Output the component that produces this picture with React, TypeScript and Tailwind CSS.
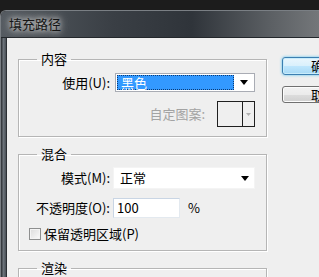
import React from "react";

const Arrow = ({ color = "#000" }: { color?: string }) => (
  <svg width="8" height="5" viewBox="0 0 8 5">
    <path d="M0 0 H8 L4 5 Z" fill={color} />
  </svg>
);

const FillPathDialog = () => {
  return (
    <div className="w-[319px] h-[277px] overflow-hidden bg-[#1c1c1c] pt-[10px] font-['Noto_Sans_CJK_SC','Noto_Sans_CJK_JP',sans-serif] text-[13px] text-black">
      <div className="h-full flex flex-col rounded-tl-[6px] overflow-hidden border-t border-l border-[#7a7f84]">
        {/* title bar */}
        <div className="h-[27px] shrink-0 flex items-center pl-[7px] bg-[linear-gradient(90deg,#555b61,#3a3f45_35%,#2f343a_60%,#5c6064_85%,#74777a)] border-b border-[#23272b]">
          <span className="px-[1px] leading-[16px] text-[#151515] [text-shadow:0_0_5px_#d8d8d8,0_0_8px_#bbbbbb,0_0_12px_#999999]">
            填充路径
          </span>
        </div>

        <div className="flex flex-1 min-h-0">
          {/* left frame */}
          <div className="w-[6px] shrink-0 bg-[linear-gradient(90deg,#2a2d31,#6c737a_50%,#4a5056)] border-r border-[#2b2f33]" />

          {/* client area */}
          <div className="flex-1 flex bg-[#efefef] pl-[11px] pt-[13px]">
            <div className="w-[249px] shrink-0">
              {/* 内容 */}
              <fieldset className="border border-[#b5b5b5] shadow-[inset_1px_1px_0_#ffffff,1px_1px_0_#ffffff] pb-[9px]">
                <legend className="ml-[18px] px-[4px] leading-[16px]">内容</legend>
                <div className="flex items-center mt-[6px]">
                  <span className="w-[91px] text-right leading-[16px]">使用(U):</span>
                  <div className="ml-[5px] w-[140px] h-[19px] flex items-center border border-[#a9acb4] bg-white p-[1px]">
                    <div className="flex-1 h-full bg-[#3399ff] border border-dotted border-[#0c3a73] text-white leading-[14px] pl-[3px]">
                      黑色
                    </div>
                    <div className="w-[19px] flex justify-center">
                      <Arrow />
                    </div>
                  </div>
                </div>
                <div className="flex items-center justify-end pr-[11px] mt-[9px]">
                  <span className="text-[#a3a3a3] leading-[16px] mr-[12px]">自定图案:</span>
                  <div className="w-[38px] h-[26px] flex border border-[#1f1f1f] bg-[#efefef]">
                    <div className="flex-1 border-r border-[#1f1f1f]" />
                    <div className="w-[11px] flex items-center justify-center">
                      <svg width="5" height="3" viewBox="0 0 5 3">
                        <path d="M0 0 H5 L2.5 3 Z" fill="#b0b0b0" />
                      </svg>
                    </div>
                  </div>
                </div>
              </fieldset>

              {/* 混合 */}
              <fieldset className="mt-[9px] border border-[#b5b5b5] shadow-[inset_1px_1px_0_#ffffff,1px_1px_0_#ffffff] pb-[8px]">
                <legend className="ml-[18px] px-[4px] leading-[16px]">混合</legend>
                <div className="flex items-center mt-[5px]">
                  <span className="w-[91px] text-right leading-[16px]">模式(M):</span>
                  <div className="ml-[3px] w-[142px] h-[22px] flex items-center border border-[#f4f4f4] bg-white">
                    <span className="flex-1 pl-[6px] leading-[16px]">正常</span>
                    <div className="w-[19px] flex justify-center">
                      <Arrow />
                    </div>
                  </div>
                </div>
                <div className="flex items-center mt-[9px]">
                  <span className="w-[91px] text-right leading-[16px]">不透明度(O):</span>
                  <div className="ml-[3px] w-[67px] h-[20px] flex items-center bg-white border border-[#c9d5e4] border-r-[#e3e9ef] border-b-[#e3e9ef] pl-[3px] leading-[16px]">
                    100
                  </div>
                  <span className="ml-[8px] leading-[16px]">%</span>
                </div>
                <div className="flex items-center mt-[8px] pl-[10px]">
                  <div className="w-[12px] h-[12px] border border-[#8e8f8f] bg-[linear-gradient(135deg,#dcdcdc,#fbfbfb)] shadow-[inset_0_0_0_1px_#f4f4f4]" />
                  <span className="ml-[3px] leading-[16px]">保留透明区域(P)</span>
                </div>
              </fieldset>

              {/* 渲染 */}
              <fieldset className="mt-[9px] border border-[#b5b5b5] shadow-[inset_1px_1px_0_#ffffff,1px_1px_0_#ffffff] h-[60px]">
                <legend className="ml-[18px] px-[4px] leading-[16px]">渲染</legend>
              </fieldset>
            </div>

            {/* buttons */}
            <div className="ml-[15px] pt-[6px] flex flex-col shrink-0">
              <button className="w-[84px] h-[18px] rounded-[3px] border border-[#3c7fb1] shadow-[0_0_3px_#55c2ef,inset_0_0_0_1px_#c8ecfb] bg-[linear-gradient(180deg,#eaf6fd,#d9f0fc_50%,#bee6fd_51%,#a7d9f5)] leading-[14px]">
                确定
              </button>
              <button className="mt-[11px] w-[84px] h-[17px] rounded-[3px] border border-[#707070] shadow-[inset_0_0_0_1px_#fcfcfc] bg-[linear-gradient(180deg,#f2f2f2,#ebebeb_50%,#dddddd_51%,#cfcfcf)] leading-[14px]">
                取消
              </button>
            </div>
          </div>
        </div>
      </div>
    </div>
  );
};

export default function App() {
  return <FillPathDialog />;
}
